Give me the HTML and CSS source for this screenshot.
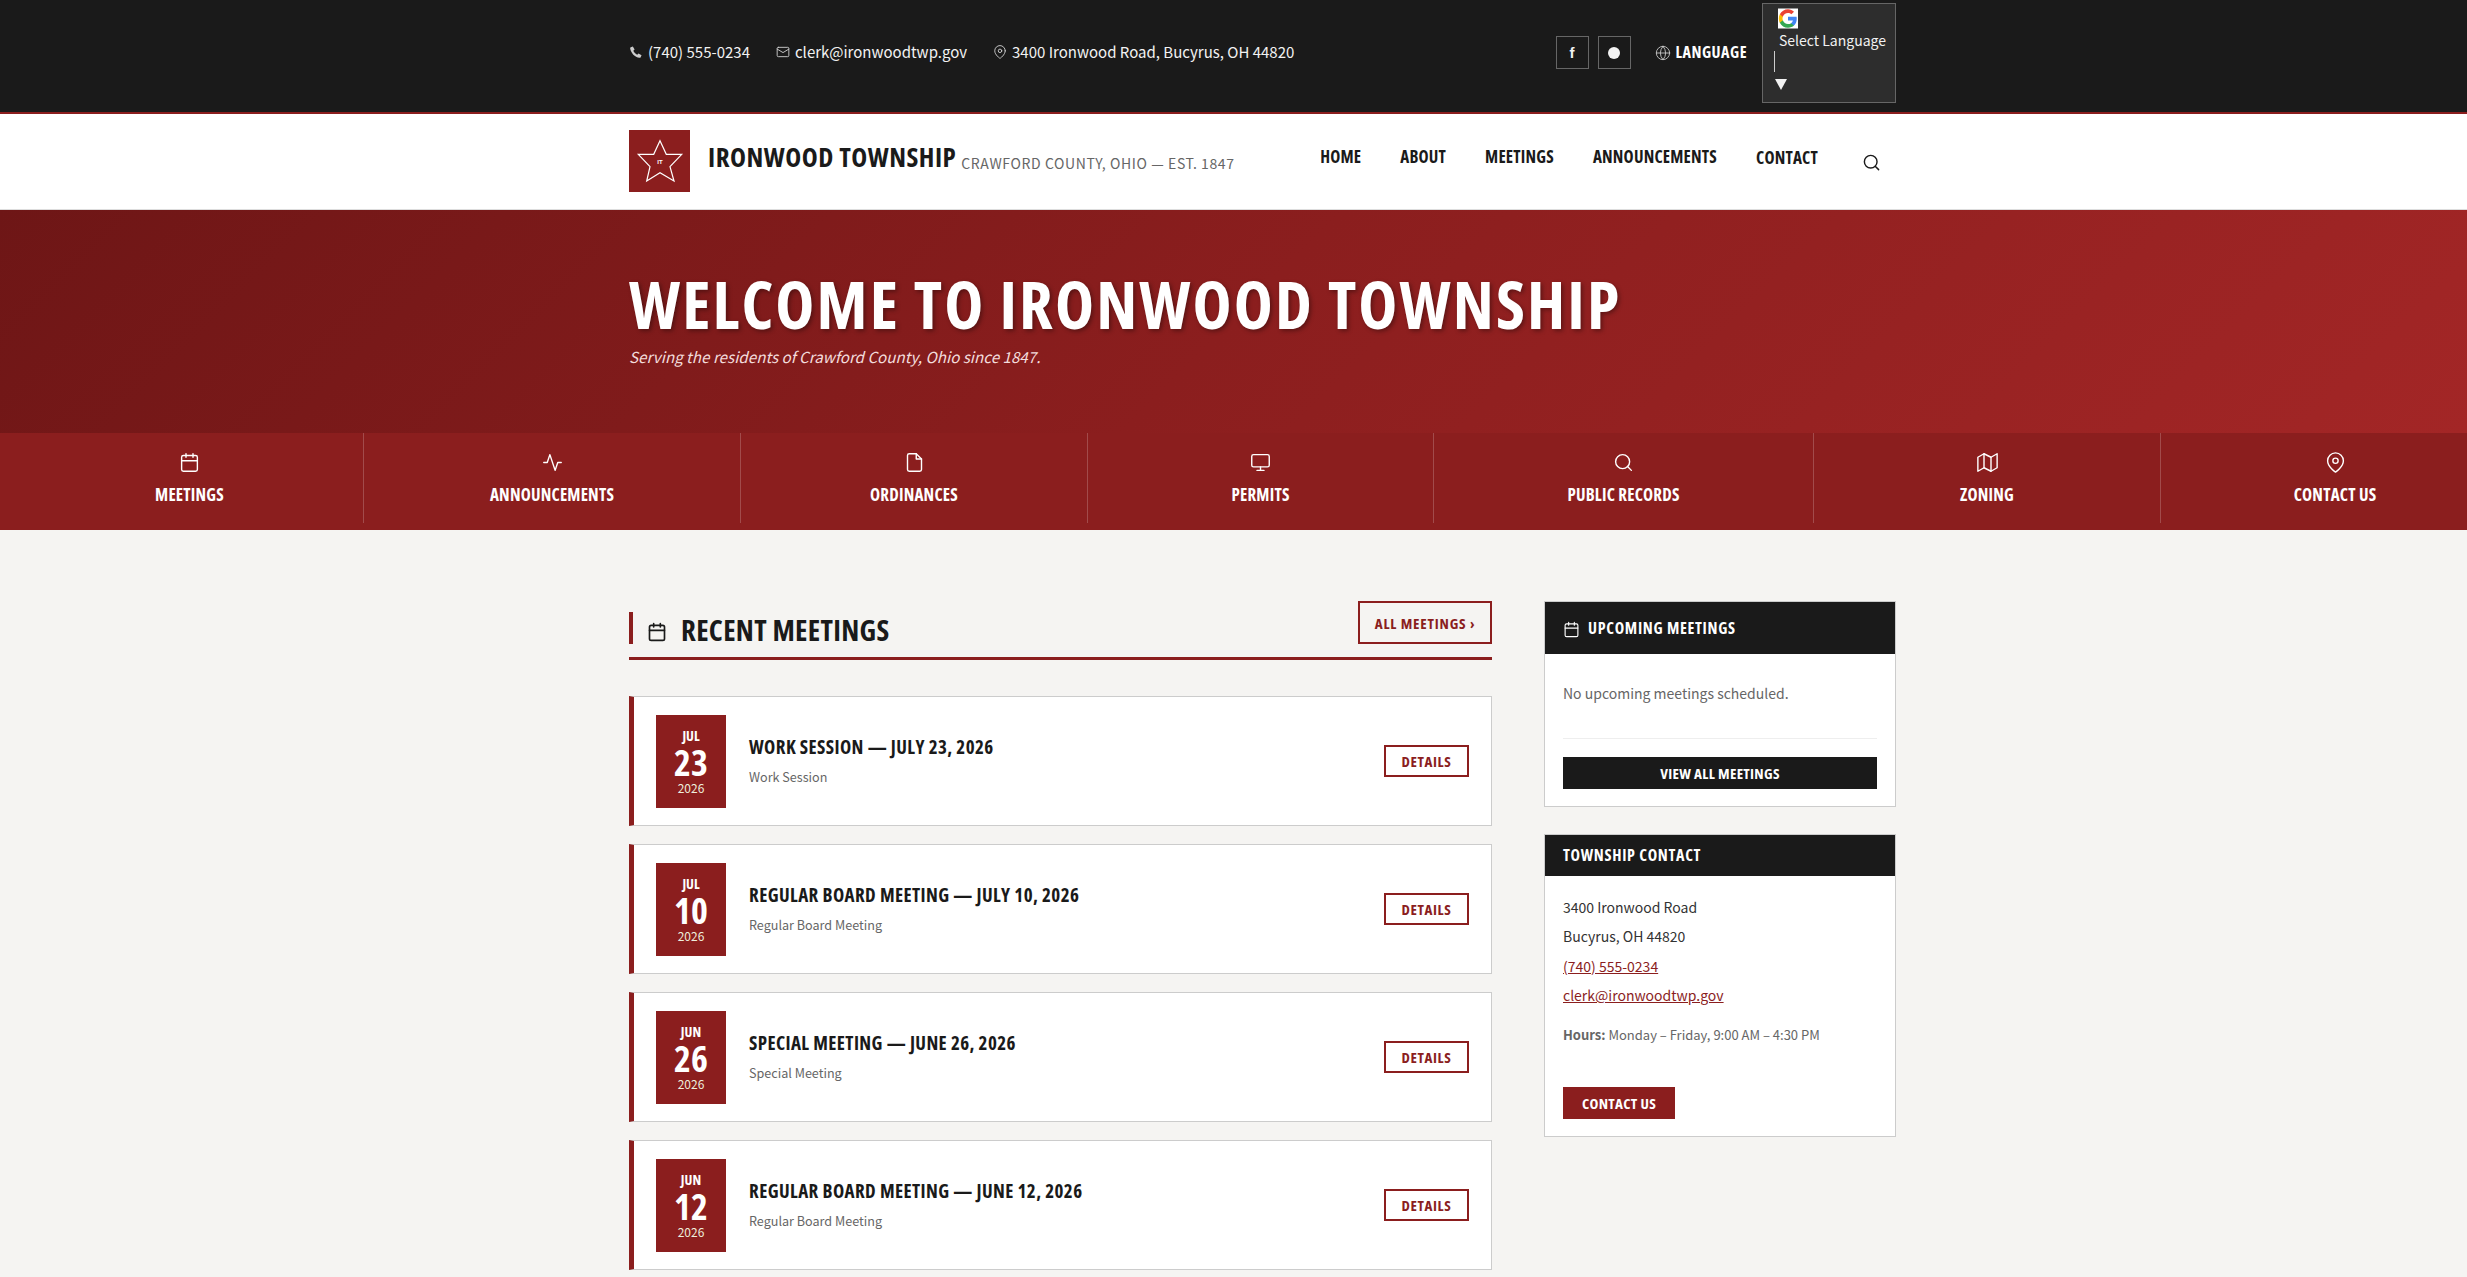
FILE: index.html
```html
<!DOCTYPE html>
<html lang="en">
<head>
  <meta charset="UTF-8" />
  <meta name="viewport" content="width=device-width, initial-scale=1.0" />
  <title>Ironwood Township</title>
  <link rel="stylesheet" href="styles.css">
</head>
<body>

  <svg class="sprite" xmlns="http://www.w3.org/2000/svg">
    <symbol id="i-calendar" viewBox="0 0 24 24"><rect x="3" y="4" width="18" height="18" rx="2"/><path d="M16 2v4M8 2v4M3 10h18"/></symbol>
    <symbol id="i-activity" viewBox="0 0 24 24"><path d="M22 12h-4l-3 9L9 3l-3 9H2"/></symbol>
    <symbol id="i-file" viewBox="0 0 24 24"><path d="M14 2H6a2 2 0 0 0-2 2v16a2 2 0 0 0 2 2h12a2 2 0 0 0 2-2V8z"/><path d="M14 2v6h6"/></symbol>
    <symbol id="i-monitor" viewBox="0 0 24 24"><rect x="2" y="3" width="20" height="14" rx="2"/><path d="M8 21h8M12 17v4"/></symbol>
    <symbol id="i-search" viewBox="0 0 24 24"><circle cx="11" cy="11" r="8"/><path d="M21 21l-4.350-4.350"/></symbol>
    <symbol id="i-map" viewBox="0 0 24 24"><path d="M1 6v16l7-4 8 4 7-4V2l-7 4-8-4z"/><path d="M8 2v16M16 6v16"/></symbol>
    <symbol id="i-pin" viewBox="0 0 24 24"><path d="M21 10c0 7-9 13-9 13s-9-6-9-13a9 9 0 0 1 18 0z"/><circle cx="12" cy="10" r="3"/></symbol>
    <symbol id="i-mail" viewBox="0 0 24 24"><rect x="2" y="4" width="20" height="16" rx="2"/><path d="M22 7l-10 6L2 7"/></symbol>
    <symbol id="i-globe" viewBox="0 0 24 24"><circle cx="12" cy="12" r="10"/><path d="M2 12h20M12 2a15.300 15.300 0 0 1 4 10 15.300 15.300 0 0 1-4 10 15.300 15.300 0 0 1-4-10 15.300 15.300 0 0 1 4-10z"/></symbol>
  </svg>

  <div class="topbar">
    <div class="wrap topbar-row">
      <div class="top-contact">
        <span class="top-item">
          <svg class="top-icon phone" viewBox="0 0 24 24"><path d="M6.600 2.500l3 5.200-2.200 2.200c1.200 2.800 3.900 5.500 6.700 6.700l2.200-2.200 5.200 3-1.500 3.600c-.4.800-1.200 1.200-2 1-8.200-1.500-14.500-7.800-16-16-.2-.8.200-1.600 1-2z"/></svg>
          (740) 555-0234
        </span>
        <span class="top-item"><svg class="top-icon"><use href="#i-mail"/></svg>clerk@ironwoodtwp.gov</span>
        <span class="top-item"><svg class="top-icon"><use href="#i-pin"/></svg>3400 Ironwood Road, Bucyrus, OH 44820</span>
      </div>
      <div class="top-right">
        <a class="social" href="#">f</a>
        <a class="social" href="#"><span class="dot"></span></a>
        <span class="lang-label"><svg class="top-icon globe"><use href="#i-globe"/></svg>LANGUAGE</span>
        <div class="translate">
          <svg class="g-logo" viewBox="0 0 24 24">
            <rect width="24" height="24" fill="#fff"/>
            <path fill="#4285f4" d="M22.500 12.200c0-.8-.1-1.500-.2-2.200H12v4.300h5.900c-.3 1.400-1 2.500-2.200 3.300v2.800h3.500c2.100-1.900 3.300-4.800 3.300-8.200z"/>
            <path fill="#34a853" d="M12 23c3 0 5.400-1 7.200-2.600l-3.500-2.800c-1 .7-2.200 1.100-3.700 1.100-2.900 0-5.300-1.900-6.200-4.500H2.200v2.800C4 20.600 7.700 23 12 23z"/>
            <path fill="#fbbc05" d="M5.800 14.200c-.2-.7-.4-1.400-.4-2.200s.1-1.500.4-2.200V7H2.200C1.400 8.500 1 10.200 1 12s.4 3.500 1.200 5z"/>
            <path fill="#ea4335" d="M12 5.400c1.600 0 3 .6 4.100 1.600l3.100-3.100C17.400 2.100 14.900 1 12 1 7.700 1 4 3.400 2.200 7l3.600 2.800C6.700 7.300 9.100 5.400 12 5.400z"/>
          </svg>
          <div class="translate-label">Select Language</div>
          <div class="translate-bar"></div>
          <div class="translate-arrow"></div>
        </div>
      </div>
    </div>
  </div>

  <header class="site-header">
    <div class="wrap header-row">
      <a class="brand" href="#">
        <span class="brand-mark">
          <svg viewBox="0 0 61 62">
            <polygon class="star" points="31,10.700 37.300,24.300 52.700,24.300 41,36.700 45,51 31,42.700 17.700,51 21,36.700 9.300,24.300 24.700,24.300"/>
            <text class="star-text" x="31" y="34" text-anchor="middle">IT</text>
          </svg>
        </span>
        <span class="brand-name">IRONWOOD TOWNSHIP</span>
        <span class="brand-sub">CRAWFORD COUNTY, OHIO — EST. 1847</span>
      </a>
      <nav class="main-nav">
        <a href="#">HOME</a>
        <a href="#">ABOUT</a>
        <a href="#">MEETINGS</a>
        <a href="#">ANNOUNCEMENTS</a>
        <a href="#" class="nav-low">CONTACT</a>
        <svg class="nav-search"><use href="#i-search"/></svg>
      </nav>
    </div>
  </header>

  <section class="hero">
    <div class="wrap">
      <h1>WELCOME TO IRONWOOD TOWNSHIP</h1>
      <p>Serving the residents of Crawford County, Ohio since 1847.</p>
    </div>
  </section>

  <div class="quick-links">
    <a class="quick" href="#"><svg><use href="#i-calendar"/></svg>MEETINGS</a>
    <a class="quick" href="#"><svg><use href="#i-activity"/></svg>ANNOUNCEMENTS</a>
    <a class="quick" href="#"><svg><use href="#i-file"/></svg>ORDINANCES</a>
    <a class="quick" href="#"><svg><use href="#i-monitor"/></svg>PERMITS</a>
    <a class="quick" href="#"><svg><use href="#i-search"/></svg>PUBLIC RECORDS</a>
    <a class="quick" href="#"><svg><use href="#i-map"/></svg>ZONING</a>
    <a class="quick" href="#"><svg><use href="#i-pin"/></svg>CONTACT US</a>
  </div>

  <div class="wrap content">
    <main class="meetings">
      <div class="section-head">
        <h2><svg><use href="#i-calendar"/></svg>RECENT MEETINGS</h2>
        <a class="btn-outline btn-all" href="#">ALL MEETINGS ›</a>
      </div>

      <article class="meeting">
        <div class="date-box"><span class="mon">JUL</span><span class="day">23</span><span class="yr">2026</span></div>
        <div class="meeting-info">
          <h3>WORK SESSION — JULY 23, 2026</h3>
          <p>Work Session</p>
        </div>
        <a class="btn-outline btn-details" href="#">DETAILS</a>
      </article>

      <article class="meeting">
        <div class="date-box"><span class="mon">JUL</span><span class="day">10</span><span class="yr">2026</span></div>
        <div class="meeting-info">
          <h3>REGULAR BOARD MEETING — JULY 10, 2026</h3>
          <p>Regular Board Meeting</p>
        </div>
        <a class="btn-outline btn-details" href="#">DETAILS</a>
      </article>

      <article class="meeting">
        <div class="date-box"><span class="mon">JUN</span><span class="day">26</span><span class="yr">2026</span></div>
        <div class="meeting-info">
          <h3>SPECIAL MEETING — JUNE 26, 2026</h3>
          <p>Special Meeting</p>
        </div>
        <a class="btn-outline btn-details" href="#">DETAILS</a>
      </article>

      <article class="meeting">
        <div class="date-box"><span class="mon">JUN</span><span class="day">12</span><span class="yr">2026</span></div>
        <div class="meeting-info">
          <h3>REGULAR BOARD MEETING — JUNE 12, 2026</h3>
          <p>Regular Board Meeting</p>
        </div>
        <a class="btn-outline btn-details" href="#">DETAILS</a>
      </article>
    </main>

    <aside class="sidebar">
      <div class="widget">
        <h4 class="widget-head tall"><svg><use href="#i-calendar"/></svg>UPCOMING MEETINGS</h4>
        <div class="widget-body">
          <p class="empty">No upcoming meetings scheduled.</p>
          <a class="btn-solid btn-dark" href="#">VIEW ALL MEETINGS</a>
        </div>
      </div>

      <div class="widget">
        <h4 class="widget-head">TOWNSHIP CONTACT</h4>
        <div class="widget-body contact">
          <p class="line">3400 Ironwood Road</p>
          <p class="line">Bucyrus, OH 44820</p>
          <p class="line"><a href="#">(740) 555-0234</a></p>
          <p class="line"><a href="#">clerk@ironwoodtwp.gov</a></p>
          <p class="hours"><strong>Hours:</strong> Monday – Friday, 9:00 AM – 4:30 PM</p>
          <a class="btn-solid btn-red" href="#">CONTACT US</a>
        </div>
      </div>
    </aside>
  </div>

</body>
</html>
```

FILE: styles.css
```css
* {
  box-sizing: border-box;
}

html,
body {
  height: 1277px;
  overflow: hidden;
}

body {
  margin: 0;
  background: #f5f4f2;
  color: #1a1a1a;
  font-family: "Noto Sans CJK SC", "Noto Sans", sans-serif;
  font-size: 14px;
  line-height: 1.2;
}

a {
  color: inherit;
  text-decoration: none;
}

h1, h2, h3, h4, p {
  margin: 0;
}

.sprite {
  display: none;
}

svg {
  fill: none;
  stroke: currentColor;
  stroke-width: 2;
  stroke-linecap: round;
  stroke-linejoin: round;
}

/* condensed headline face */
.lang-label,
.brand-name,
.main-nav a,
.hero h1,
.quick,
.section-head h2,
.btn-outline,
.mon,
.day,
.meeting-info h3,
.widget-head,
.btn-solid {
  font-family: "Open Sans", sans-serif;
  font-stretch: 75%;
  font-weight: 700;
  white-space: nowrap;
}

.wrap {
  width: 1267px;
  margin-left: 629px;
}

/* top bar */
.topbar {
  height: 114px;
  background: #1a1a1a;
  border-bottom: 2px solid #8b1e1e;
  color: #f2f2f2;
}

.topbar-row {
  display: flex;
  justify-content: space-between;
  height: 112px;
}

.top-contact {
  display: flex;
  align-items: center;
  gap: 26px;
  padding-bottom: 8px;
}

.top-item {
  display: flex;
  align-items: center;
  gap: 5px;
  font-size: 15px;
  white-space: nowrap;
}

.top-icon {
  width: 14px;
  height: 14px;
  stroke-width: 1.600;
  color: #ccc;
}

.top-icon.phone {
  fill: #ccc;
  stroke: none;
}

.top-right {
  display: flex;
  align-items: flex-start;
}

.social {
  display: flex;
  align-items: center;
  justify-content: center;
  width: 33px;
  height: 33px;
  margin: 36px 9px 0 0;
  border: 1px solid #666;
  font-family: "Liberation Sans", sans-serif;
  font-size: 15px;
  font-weight: 700;
}

.dot {
  width: 12px;
  height: 12px;
  border-radius: 50%;
  background: #f2f2f2;
}

.lang-label {
  display: flex;
  align-items: center;
  gap: 5px;
  margin: 43px 15px 0 15px;
  font-size: 16px;
  letter-spacing: 0.5px;
  color: #fff;
}

.top-icon.globe {
  width: 16px;
  height: 16px;
  stroke-width: 1.300;
}

.translate {
  width: 134px;
  height: 100px;
  margin-top: 3px;
  padding: 4px 11px;
  background: #2d2d2d;
  border: 1px solid #666;
}

.g-logo {
  display: block;
  width: 20px;
  height: 21px;
  margin-left: 4px;
  stroke: none;
}

.translate-label {
  margin: 2px 0 0 5px;
  font-size: 14px;
  line-height: 18px;
  white-space: nowrap;
}

.translate-bar {
  width: 1px;
  height: 21px;
  margin-top: 2px;
  background: #ccc;
}

.translate-arrow {
  width: 0;
  height: 0;
  margin-top: 7px;
  margin-left: 1px;
  border-left: 6px solid transparent;
  border-right: 6px solid transparent;
  border-top: 11px solid #f2f2f2;
}

/* header */
.site-header {
  height: 96px;
  background: #fff;
  border-bottom: 1px solid #ddd;
}

.header-row {
  display: flex;
  justify-content: space-between;
  height: 95px;
  padding-right: 15px;
}

.brand {
  display: flex;
  align-items: flex-start;
}

.brand-mark {
  flex: none;
  width: 61px;
  height: 62px;
  margin-top: 16px;
  background: #8b1e1e;
}

.brand-mark svg {
  display: block;
  width: 61px;
  height: 62px;
  color: #fff;
}

.star {
  stroke-width: 1.200;
  stroke-linejoin: miter;
}

.star-text {
  fill: #fff;
  stroke: none;
  font-family: "Liberation Sans", sans-serif;
  font-size: 6px;
  font-weight: 700;
}

.brand-name {
  margin: 24px 0 0 18px;
  font-size: 27px;
  line-height: 38px;
  letter-spacing: 0.5px;
  color: #1a1a1a;
}

.brand-sub {
  margin: 35px 0 0 5px;
  font-size: 14px;
  line-height: 28px;
  letter-spacing: 0.6px;
  white-space: nowrap;
  color: #666;
}

.main-nav {
  display: flex;
  align-items: flex-start;
  gap: 39px;
}

.main-nav a {
  margin-top: 31px;
  font-size: 17px;
  line-height: 23px;
  letter-spacing: 0.2px;
  color: #1a1a1a;
}

.main-nav a.nav-low {
  margin-top: 32px;
}

.nav-search {
  width: 19px;
  height: 19px;
  margin: 39px 0 0 5px;
  color: #1a1a1a;
  stroke-width: 1.800;
}

/* hero */
.hero {
  height: 223px;
  padding-top: 55px;
  background: linear-gradient(135deg, #6e1616 0%, #8b1e1e 50%, #a32626 100%);
  color: #fff;
}

.hero h1 {
  font-size: 66px;
  line-height: 76px;
  letter-spacing: 2.100px;
  text-shadow: 2px 2px 4px rgba(0, 0, 0, 0.35);
}

.hero p {
  margin-top: 6px;
  font-size: 15.200px;
  line-height: 18px;
  font-style: italic;
  color: #f3dcdc;
}

/* quick links */
.quick-links {
  display: grid;
  grid-template-columns: 364fr 377fr 347fr 346fr 380fr 347fr 306fr;
  height: 97px;
  padding-bottom: 7px;
  background: #8b1e1e;
}

.quick {
  display: flex;
  flex-direction: column;
  align-items: center;
  padding-top: 19px;
  border-right: 1px solid rgba(255, 255, 255, 0.2);
  font-size: 17px;
  line-height: 23px;
  letter-spacing: 0.2px;
  color: #fff;
}

.quick:first-child {
  padding-left: 16px;
}

.quick:last-child {
  padding-left: 42px;
  border-right: none;
}

.quick svg {
  width: 21px;
  height: 21px;
  margin-bottom: 10px;
  stroke-width: 1.600;
}

/* content */
.content {
  display: flex;
  gap: 52px;
  padding-top: 71px;
}

.meetings {
  width: 863px;
}

.section-head {
  display: flex;
  align-items: flex-start;
  justify-content: space-between;
  height: 59px;
  margin-bottom: 36px;
  border-bottom: 3px solid #8b1e1e;
}

.section-head h2 {
  display: flex;
  align-items: center;
  height: 32px;
  margin-top: 11px;
  padding: 5px 0 0 14px;
  border-left: 4px solid #8b1e1e;
  font-size: 29px;
  letter-spacing: 0.3px;
  color: #1a1a1a;
}

.section-head h2 svg {
  width: 20px;
  height: 20px;
  margin: 2px 14px 0 0;
}

.btn-outline {
  display: flex;
  align-items: center;
  justify-content: center;
  border: 2px solid #8b1e1e;
  color: #8b1e1e;
}

.btn-all {
  width: 134px;
  height: 43px;
  font-size: 15px;
  letter-spacing: 0.8px;
}

.meeting {
  display: flex;
  align-items: center;
  height: 130px;
  margin-bottom: 18px;
  padding: 0 22px;
  background: #fff;
  border: 1px solid #ccc;
  border-left: 5px solid #8b1e1e;
}

.date-box {
  display: flex;
  flex-direction: column;
  align-items: center;
  flex: none;
  width: 70px;
  height: 93px;
  padding-top: 12px;
  background: #8b1e1e;
  color: #fff;
}

.mon {
  margin-bottom: 1px;
  font-size: 14px;
  line-height: 18px;
}

.day {
  font-size: 36px;
  line-height: 34px;
}

.yr {
  font-size: 12px;
  line-height: 15px;
  color: #eed;
}

.meeting-info {
  flex: 1;
  margin: -1px 0 0 23px;
}

.meeting-info h3 {
  font-size: 19px;
  line-height: 24px;
  letter-spacing: 0.4px;
  color: #1a1a1a;
}

.meeting-info p {
  margin-top: 9px;
  font-size: 12.600px;
  line-height: 18px;
  color: #666;
}

.btn-details {
  width: 85px;
  height: 32px;
  font-size: 15px;
  letter-spacing: 0.6px;
}

/* sidebar */
.sidebar {
  width: 352px;
}

.widget {
  margin-bottom: 27px;
  background: #fff;
  border: 1px solid #ccc;
}

.widget-head {
  display: flex;
  align-items: center;
  height: 41px;
  padding: 1px 0 0 18px;
  background: #1a1a1a;
  font-size: 16px;
  letter-spacing: 0.7px;
  color: #fff;
}

.widget-head.tall {
  height: 52px;
  padding-top: 2px;
}

.widget-head svg {
  width: 17px;
  height: 17px;
  margin-right: 8px;
  stroke-width: 1.600;
}

.widget-body {
  padding: 18px 18px 17px;
}

.widget-body.contact {
  padding-top: 22px;
}

.empty {
  padding: 13px 0 36px;
  margin-bottom: 18px;
  border-bottom: 1px solid #eee;
  font-size: 14px;
  color: #666;
}

.btn-solid {
  display: flex;
  align-items: center;
  justify-content: center;
  height: 32px;
  font-size: 15px;
  letter-spacing: 0.3px;
  color: #fff;
}

.btn-dark {
  background: #1a1a1a;
}

.btn-red {
  width: 112px;
  background: #8b1e1e;
}

.line {
  margin-bottom: 11px;
  font-size: 14px;
  line-height: 18.500px;
  color: #333;
}

.line a {
  color: #8b1e1e;
  text-decoration: underline;
}

.hours {
  margin: 22px 0 45px;
  font-size: 13px;
  color: #666;
}
```
